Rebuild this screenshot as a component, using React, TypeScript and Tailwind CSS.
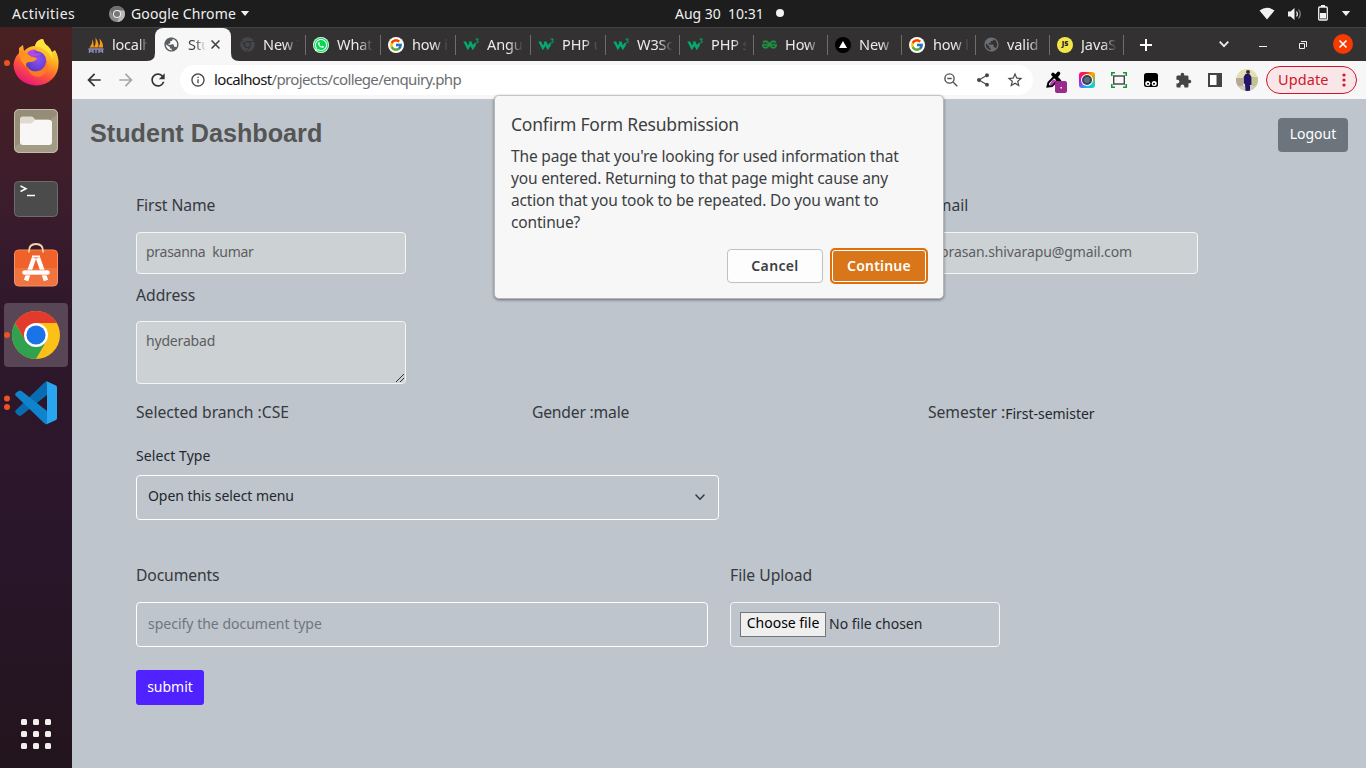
import type { ReactNode } from "react";
import {
  MdArrowBack,
  MdArrowForward,
  MdRefresh,
  MdInfoOutline,
  MdStarBorder,
  MdShare,
  MdExtension,
  MdPublic,
} from "react-icons/md";
import { FcGoogle } from "react-icons/fc";
import { FaWhatsapp, FaChrome } from "react-icons/fa";
import { SiGeeksforgeeks } from "react-icons/si";

/* ---------- tab icons ---------- */

function PmaIcon() {
  return (
    <svg viewBox="0 0 16 16" className="size-4">
      <path d="M1.500 10.500 Q4.500 7 4.800 2 L6 10.500Z M6 10.500 Q8.500 6 7.300 0.500 Q11 5 10.500 10.500Z M10.800 10.500 Q13 6 11.500 1.500 Q15.500 6 15 10.500Z" fill="#f59a1b" />
      <path d="M0.500 12h15M1.500 16V12M5 16v-4M8 16v-4M11 16v-4M14.500 16v-4M1.500 14h3M11 14h3" stroke="#8a8cb5" strokeWidth="1.400" fill="none" />
    </svg>
  );
}

function W3Icon() {
  return (
    <svg viewBox="0 0 16 16" className="size-4">
      <path d="M0.300 4.500H3.200L5 8.500L6.300 6L5.600 4.500H8.500L10 8.300L11.500 6H12.800V8.500L9.700 13.200L7.500 9L4.800 13.200Z" fill="#04aa6d" />
      <path d="M12.500 2h2.800l-1.400 1.600q1.700 0 1.500 1.400q-.6 1.400-2.700.6" stroke="#04aa6d" strokeWidth="1" fill="none" />
    </svg>
  );
}

function GoogleIcon() {
  return (
    <span className="flex size-4 items-center justify-center rounded-full bg-white">
      <FcGoogle className="size-[14px]" />
    </span>
  );
}

function WhatsIcon() {
  return (
    <span className="flex size-4 items-center justify-center rounded-full bg-[#06d755] text-white ring-1 ring-white/80 ring-inset">
      <FaWhatsapp className="size-[14px]" />
    </span>
  );
}

function TriangleIcon() {
  return (
    <svg viewBox="0 0 16 16" className="size-4">
      <circle cx="8" cy="8" r="8" fill="#000" />
      <path d="M8 4l4 7H4z" fill="#fff" />
    </svg>
  );
}

function JsIcon() {
  return (
    <span className="flex size-4 items-center justify-center rounded-full bg-[#f5e648] font-['Noto_Sans'] text-[7px] font-black text-[#222]">
      JS
    </span>
  );
}

type Tab = { icon: ReactNode; title: string; width: string };

const tabs: Tab[] = [
  { icon: <FaChrome className="size-[15px] text-[#45484b]" />, title: "New T", width: "w-[75px] pl-2" },
  { icon: <WhatsIcon />, title: "What", width: "w-[75px] pl-[7px]" },
  { icon: <GoogleIcon />, title: "how i", width: "w-[75px] pl-[7px]" },
  { icon: <W3Icon />, title: "Angu", width: "w-[75px] pl-[7px]" },
  { icon: <W3Icon />, title: "PHP u", width: "w-[75px] pl-[7px]" },
  { icon: <W3Icon />, title: "W3Sc", width: "w-[74px] pl-[7px]" },
  { icon: <W3Icon />, title: "PHP s", width: "w-[74px] pl-[7px]" },
  { icon: <SiGeeksforgeeks className="size-[15px] stroke-[#1e9442] stroke-1 text-[#1e9442]" />, title: "How", width: "w-[74px] pl-[7px]" },
  { icon: <TriangleIcon />, title: "New", width: "w-[74px] pl-[7px]" },
  { icon: <GoogleIcon />, title: "how l", width: "w-[74px] pl-[7px]" },
  { icon: <MdPublic className="size-[17px] shrink-0 text-[#6b6e73]" />, title: "valid", width: "w-[74px] pl-[7px]" },
  { icon: <JsIcon />, title: "JavaS", width: "w-[74px] pl-[7px]" },
];

function TabTitle({ children, dark }: { children: ReactNode; dark?: boolean }) {
  return (
    <span
      className={
        "ml-2 block overflow-hidden pb-[2px] text-[14.5px] leading-5 whitespace-pre " +
        (dark
          ? "w-[18px] text-[#3c4043] [mask-image:linear-gradient(to_right,black_40%,transparent)]"
          : "w-[36px] tracking-[-0.100px] text-[#ebebeb] [mask-image:linear-gradient(to_right,black_60%,transparent)]")
      }
    >
      {children}
    </span>
  );
}

/* ---------- desktop ---------- */

function TopBar() {
  return (
    <header className="flex h-[27px] shrink-0 items-center bg-[#1d1d1d] text-[14px] text-[#f0f0f0]">
      <span className="w-[97px] pl-3 text-[14px] tracking-[0.500px]">Activities</span>
      <svg viewBox="0 0 16 16" className="ml-3 size-4">
        <circle cx="8" cy="8" r="8" fill="#8a8a8a" />
        <path d="M8 4.200H15A8 8 0 0 1 8 16L11.300 10Z" fill="#b9b9b9" />
        <path d="M1 4A8 8 0 0 1 15 4.200H8L4.500 10Z" fill="#6f6f6f" />
        <circle cx="8" cy="8" r="4" fill="#eee" />
        <circle cx="8" cy="8" r="3" fill="#777" />
      </svg>
      <span className="ml-[6px] w-[105px] whitespace-nowrap tracking-[0.120px]">Google Chrome</span>
      <svg viewBox="0 0 10 6" className="ml-1 h-[5px] w-[10px]"><path d="M0 0h10L5 6z" fill="#f0f0f0" /></svg>
      <span className="ml-[425px] w-[53px] whitespace-nowrap">Aug 30</span>
      <span className="w-[35px]">10:31</span>
      <span className="-mt-px ml-[13px] size-2 rounded-full bg-[#f2f2f2]" />
      <svg viewBox="0 0 16 13" className="ml-auto h-[13px] w-4"><path d="M0.500 3.500Q8-2 15.500 3.500L8 12.500z" fill="#f2f2f2" /></svg>
      <svg viewBox="0 0 16 14" className="ml-3 h-[14px] w-4">
        <path d="M1 4.500h2.500L7.500 1v12L3.500 9.500H1z" fill="#f2f2f2" />
        <path d="M9.500 4.500q1.800 2.500 0 5" stroke="#f2f2f2" strokeWidth="1.200" fill="none" />
        <path d="M11.500 2.500q3.500 4.500 0 9" stroke="#8a8a8a" strokeWidth="1.200" fill="none" />
      </svg>
      <svg viewBox="0 0 10 16" className="-mt-px ml-[15px] h-4 w-[10px]">
        <path d="M3 0h4v2H3z" fill="#f2f2f2" />
        <rect x="0.700" y="2" width="8.600" height="13" rx="1" fill="none" stroke="#f2f2f2" strokeWidth="1.300" />
        <path d="M2 8h6v5.500H2z" fill="#f2f2f2" />
      </svg>
      <svg viewBox="0 0 10 6" className="mr-[15px] ml-[13px] h-[5px] w-[10px]"><path d="M0 0h10L5 6z" fill="#f0f0f0" /></svg>
    </header>
  );
}

function Dock() {
  return (
    <nav className="flex w-[72px] shrink-0 flex-col bg-[linear-gradient(to_bottom,#4a2122_0%,#3a1c2c_25%,#2e172b_40%,#2a162b_70%,#22141c_100%)] pt-[2px]">
      <svg viewBox="0 0 72 68" className="h-[68px] w-[72px]">
        <defs>
          <linearGradient id="ff" x1="0.800" y1="0" x2="0.300" y2="1">
            <stop offset="0" stopColor="#fff04a" />
            <stop offset="0.350" stopColor="#ffb31f" />
            <stop offset="0.650" stopColor="#ff5a35" />
            <stop offset="1" stopColor="#e6127d" />
          </linearGradient>
          <radialGradient id="ffc" cx="0.600" cy="0.400" r="0.650">
            <stop offset="0" stopColor="#8a52f5" />
            <stop offset="0.600" stopColor="#6f42d8" />
            <stop offset="1" stopColor="#4a3fa8" />
          </radialGradient>
        </defs>
        <circle cx="7" cy="34" r="3" fill="#e95420" />
        <path d="M19 19 L23 16 L24 22 Q29 17 35 17 Q36 11 43 10 Q44 15 48 17 Q51 20 52 23 L55 21 Q59 28 58.500 35 A22.500 21 0 0 1 13.500 36 Q14 29 19 24Z" fill="url(#ff)" />
        <path d="M35 17 Q36 11 43 10 Q45 16 48 18 Q53 23 53 32 Q50 20 35 17Z" fill="#ffe43a" />
        <circle cx="36" cy="32.500" r="10.500" fill="url(#ffc)" />
        <path d="M19 24 Q23 25 27 24 Q30 28 37 29 Q36 33 30 33 Q25 33 26 38 Q20 32 19 24Z" fill="#ff9420" />
        <path d="M26 36 Q30 44 38 42 Q46 40 46 31 Q50 42 42 47 Q31 51 26 36Z" fill="#ff7a28" />
        <path d="M27 24 Q31 19 37 21 Q34 23 34 24 Q39 24 42 25 Q37 28 32 28Z" fill="#b04ae0" />
      </svg>
      <svg viewBox="0 0 72 68" className="h-[68px] w-[72px]">
        <rect x="14" y="12" width="44" height="44" rx="5" fill="#a29b86" />
        <path d="M19 12.500H53Q57.500 12.500 57.500 17L14.500 50V17Q14.500 12.500 19 12.500Z" fill="#958d78" />
        <rect x="14.500" y="12.500" width="43" height="43" rx="5" fill="none" stroke="#c2bca9" />
        <path d="M20 22q0-2.500 2.500-2.500h9q2 0 3.500 3h14v8H20z" fill="#dedace" />
        <path d="M20 26.500h11l4-3.500h14.500q2.500 0 2.500 2.500V45q0 3-3 3H23q-3 0-3-3z" fill="#f8f7f5" />
      </svg>
      <svg viewBox="0 0 72 68" className="h-[68px] w-[72px]">
        <rect x="14.500" y="16.500" width="43" height="35" rx="4" fill="#4b4b4b" stroke="#6c6c6c" />
        <path d="M20.500 21l5.500 2.700l-5.500 2.800" stroke="#fff" strokeWidth="1.500" fill="none" />
        <path d="M27 30.500h8" stroke="#fff" strokeWidth="1.500" />
      </svg>
      <svg viewBox="0 0 72 68" className="h-[68px] w-[72px]">
        <rect x="14.500" y="17" width="43" height="36" rx="4" fill="#f0743f" stroke="#f59067" />
        <path d="M15 35V21q0-3.500 3.500-3.500h35q3.500 0 3.500 3.500V35z" fill="#f0622a" />
        <path d="M29 19.500V18q0-7 7-7t7 7v1.500" stroke="#f7d7a6" strokeWidth="1.800" fill="none" />
        <path d="M26 47.500L34 25M46 47.500L38 25" stroke="#fff" strokeWidth="4.500" />
        <path d="M32 23.500h8" stroke="#fff" strokeWidth="2" />
        <rect x="22" y="37" width="28" height="5" rx="2.500" fill="#fff" stroke="#f0743f" strokeWidth="0.600" />
      </svg>
      <svg viewBox="0 0 72 68" className="h-[68px] w-[72px]">
        <rect x="4" y="2" width="64" height="64" rx="4" fill="#584555" />
        <circle cx="7" cy="34" r="3" fill="#e95420" />
        <circle cx="36" cy="34" r="24" fill="#fbc116" />
        <path d="M15.200 22A24 24 0 0 0 36 58L46.400 40L36 34L25.600 40Z" fill="#30a24f" />
        <path d="M15.200 22A24 24 0 0 1 56.800 22H36L25.600 40Z" fill="#e23b2e" />
        <circle cx="36" cy="34" r="12" fill="#fff" />
        <circle cx="36" cy="34" r="9.600" fill="#1a73e8" />
      </svg>
      <svg viewBox="0 0 72 68" className="h-[68px] w-[72px]">
        <circle cx="7" cy="29.500" r="3" fill="#e95420" />
        <circle cx="7" cy="38" r="3" fill="#e95420" />
        <path d="M15.500 41.500Q14.500 43 16 44.200L18.500 46.500Q20 47.500 21.500 46.300L47 26V13Q45.500 12.500 44 14Z" fill="#0a6cb0" />
        <path d="M15.500 26.500Q14.500 25 16 23.800L18.500 22Q20 21 21.500 22L47 42V55Q45.500 55.500 44 54Z" fill="#0f84cc" />
        <path d="M46 12L56 16.500Q57 17 57 18.500V49Q57 50.500 56 51L46 55.500Q47 54 47 52V15.500Q47 13.500 46 12Z" fill="#28a7f0" />
      </svg>
      <div className="mx-auto mt-auto mb-[19px] grid grid-cols-3 gap-[6px]">
        {Array.from({ length: 9 }, (_, i) => (
          <span key={i} className="size-[6px] rounded-[1.500px] bg-[#f2f0ee]" />
        ))}
      </div>
    </nav>
  );
}

/* ---------- browser chrome ---------- */

function TabStrip() {
  return (
    <div className="flex h-[34px] shrink-0 items-center border-t border-[#454243] bg-[#333132]">
      <div className="flex w-[83px] items-center pl-4">
        <PmaIcon />
        <span className="ml-2 block w-[36px] overflow-hidden pb-[2px] text-[14.5px] leading-5 tracking-[-0.200px] whitespace-pre text-[#ebebeb] [mask-image:linear-gradient(to_right,black_75%,transparent)]">
          localh
        </span>
      </div>
      <div className="relative flex h-full w-[76px] items-center rounded-t-lg bg-[#f7f7f7] pl-2">
        <svg viewBox="0 0 8 8" className="absolute bottom-0 -left-2 size-2"><path d="M8 0v8H0Q8 8 8 0z" fill="#f7f7f7" /></svg>
        <svg viewBox="0 0 8 8" className="absolute -right-2 bottom-0 size-2"><path d="M0 0v8H8Q0 8 0 0z" fill="#f7f7f7" /></svg>
        <MdPublic className="size-[17px] -rotate-12 text-[#5a5e63]" />
        <TabTitle dark>Stu</TabTitle>
        <svg viewBox="0 0 8 8" className="ml-[5px] size-[9px]"><path d="M.5.5l7 7M7.500.5l-7 7" stroke="#3c4043" strokeWidth="1.400" /></svg>
      </div>
      {tabs.map((t, i) => (
        <div key={i} className={"flex h-5 items-center border-r border-[#6f6d6e] " + t.width}>
          <span className="flex w-4 shrink-0 items-center justify-center">{t.icon}</span>
          <TabTitle>{t.title}</TabTitle>
        </div>
      ))}
      <svg viewBox="0 0 12 12" className="ml-4 size-3"><path d="M6 0v12M0 6h12" stroke="#fff" strokeWidth="2" /></svg>
      <svg viewBox="0 0 10 7" className="ml-[67px] h-[7px] w-[10px]"><path d="M.7.7L5 5.200L9.300.7" stroke="#eee" strokeWidth="1.800" fill="none" /></svg>
      <span className="mt-[4px] ml-[30px] h-px w-2 bg-[#eee]" />
      <svg viewBox="0 0 8 8" className="ml-8 size-2"><path d="M.5 2.500h5v5h-5zM2 .5h5.500V6" stroke="#eee" strokeWidth="1" fill="none" /></svg>
      <svg viewBox="0 0 20 20" className="-mt-px ml-[26px] size-5">
        <circle cx="10" cy="10" r="10" fill="#f53b00" />
        <path d="M6.500 6.500l7 7M13.500 6.500l-7 7" stroke="#fff" strokeWidth="1.600" />
      </svg>
    </div>
  );
}

function Slot({ children }: { children: ReactNode }) {
  return <span className="flex w-8 shrink-0 items-center justify-center">{children}</span>;
}

function Toolbar() {
  return (
    <div className="flex h-[38px] shrink-0 items-center bg-[#f7f7f7] pl-[6px] text-[#46494c]">
      <Slot><MdArrowBack className="size-5 text-[#333]" /></Slot>
      <Slot><MdArrowForward className="size-5 text-[#a6a6a6]" /></Slot>
      <Slot><MdRefresh className="size-5 text-[#333]" /></Slot>
      <div className="ml-[6px] flex h-[30px] w-[853px] shrink-0 items-center rounded-full bg-white pl-[10px]">
        <MdInfoOutline className="size-4" />
        <span className="ml-2 pb-[2px] text-[15px] tracking-[-0.650px] whitespace-nowrap text-[#6b6e72]">
          <span className="text-[#161616]">localhost</span>/projects/college/enquiry.php
        </span>
        <span className="ml-auto flex pr-[2px]">
          <Slot>
            <svg viewBox="0 0 14 14" className="size-[14px]" fill="none" stroke="#505356" strokeWidth="1.400">
              <circle cx="5.500" cy="5.500" r="4.600" />
              <path d="M3.300 5.500h4.400M9 9l4.300 4.300" />
            </svg>
          </Slot>
          <Slot><MdShare className="size-4" /></Slot>
          <Slot><MdStarBorder className="size-[18px]" /></Slot>
        </span>
      </div>
      <span className="w-[6px]" />
      <Slot>
        <svg viewBox="0 0 24 24" className="size-6 translate-x-[2px] translate-y-[2px]">
          <path d="M2.500 16.500l1-4L9.500 6.500l3.500 3.500L7 16z" fill="#fff" stroke="#000" strokeWidth="2" />
          <path d="M4.500 14.500l3.500-5l3 1L6.500 15.500z" fill="#c930c9" />
          <path d="M8 4.500L14.500 11M11 6.500L13.500 3.500" stroke="#000" strokeWidth="3.600" strokeLinecap="round" />
          <rect x="10" y="11" width="12" height="12" rx="2" fill="#9a2a8b" />
          <rect x="15.500" y="17" width="1.500" height="1.500" fill="#fff" />
        </svg>
      </Slot>
      <Slot>
        <span className="flex size-4 items-center justify-center rounded-[3px] bg-[conic-gradient(from_45deg,#f5a000,#10d0d8_25%,#20b0f0_40%,#b020e8_60%,#ff1070_75%,#ff2020_85%,#f5c000)]">
          <span className="flex size-3 items-center justify-center rounded-full bg-white">
            <span className="size-[10px] rounded-full border-2 border-[#3b4450] bg-[#527080]" />
          </span>
        </span>
      </Slot>
      <Slot>
        <svg viewBox="0 0 16 16" className="size-4">
          <path d="M.8 4V.8H4M12 .8h3.200V4M15.200 12v3.200H12M4 15.200H.8V12" stroke="#159a30" strokeWidth="1.600" fill="none" />
          <rect x="2.700" y="4" width="10.600" height="8" fill="none" stroke="#444" strokeWidth="1.400" />
        </svg>
      </Slot>
      <Slot>
        <svg viewBox="0 0 14 14" className="size-[14px]">
          <rect width="14" height="14" rx="2.500" fill="#000" />
          <circle cx="3.800" cy="10.500" r="2.500" fill="#fff" /><circle cx="10.200" cy="10.500" r="2.500" fill="#fff" />
          <circle cx="4" cy="10.800" r="1" fill="#000" /><circle cx="10" cy="10.800" r="1" fill="#000" />
        </svg>
      </Slot>
      <Slot><MdExtension className="size-[17px] text-[#444]" /></Slot>
      <Slot>
        <svg viewBox="0 0 14 14" className="size-[14px]"><path d="M1 1h12v12H1z" fill="#fff" stroke="#444" strokeWidth="2" /><path d="M8.500 1H13v12H8.500z" fill="#444" /></svg>
      </Slot>
      <Slot>
        <svg viewBox="0 0 22 22" className="size-[22px]">
          <clipPath id="av"><circle cx="11" cy="11" r="11" /></clipPath>
          <g clipPath="url(#av)">
            <path d="M0 0h22v22H0z" fill="#e3dfb4" />
            <path d="M0 9h7v8H0z" fill="#b9a795" />
            <path d="M16 8h6v9h-6z" fill="#c3c293" />
            <path d="M0 17h22v5H0z" fill="#cfcac0" />
            <path d="M9.500 5h4l2 3v8l-1.500 0V22H9.500L9 15l-1.300-.5V8z" fill="#241469" />
            <circle cx="12" cy="3" r="2" fill="#3c2a35" />
          </g>
        </svg>
      </Slot>
      <div className="ml-[3px] flex h-7 w-[91px] items-center rounded-full border border-[#d31526] bg-[#f8e6e8] pl-[11px] text-[14.5px] tracking-[0.100px] text-[#d31526]">
        <span className="w-[50px] pb-px">Update</span>
        <svg viewBox="0 0 4 14" className="ml-[14px] h-[14px] w-1"><circle cx="2" cy="2" r="1.600" fill="#d31526" /><circle cx="2" cy="7" r="1.600" fill="#d31526" /><circle cx="2" cy="12" r="1.600" fill="#d31526" /></svg>
      </div>
    </div>
  );
}

/* ---------- page ---------- */

function Label({ children, className = "" }: { children: ReactNode; className?: string }) {
  return <div className={"h-[22px] text-[15.7px] leading-[22px] whitespace-nowrap text-[#36393d] " + className}>{children}</div>;
}

function ReadOnly({ children, className = "" }: { children: ReactNode; className?: string }) {
  return (
    <div className={"w-[270px] rounded-[4px] border border-[#f4f5f6] bg-[#ccd1d4] pl-[9px] text-[14px] whitespace-pre text-[#5c5e60] " + className}>
      {children}
    </div>
  );
}

function Page() {
  return (
    <main className="relative min-h-0 flex-1 bg-[#bec5cd] pt-[19px] text-[14px] text-[#24282c]">
      <div className="flex h-[34px] items-center justify-between pr-[18px] pl-[18px]">
        <h1 className="-mt-[3px] font-['Liberation_Sans'] text-[25.2px] font-bold text-[#555]">Student Dashboard</h1>
        <button className="h-[34px] w-[70px] rounded-[4px] bg-[#6c757d] pb-[3px] text-[14px] text-white">Logout</button>
      </div>

      <form className="px-16 pt-[42px]">
        <div className="flex">
          <div className="w-[792px]">
            <Label className="tracking-[-0.080px]">First Name</Label>
            <ReadOnly className="mt-4 h-[42px] leading-[37px] tracking-[-0.280px]">{"prasanna  kumar"}</ReadOnly>
          </div>
          <div>
            <Label>Email</Label>
            <ReadOnly className="mt-4 h-[42px] leading-[37px] tracking-[-0.110px]">
              <span className="pl-[2px]">prasan.shivarapu@gmail.com</span>
            </ReadOnly>
          </div>
        </div>
        <Label className="mt-[10px]">Address</Label>
        <div className="relative mt-[15px] w-[270px]">
          <ReadOnly className="h-[63px] pt-2 leading-[22px] tracking-[-0.180px]">hyderabad</ReadOnly>
          <svg viewBox="0 0 8 8" className="absolute right-[2px] bottom-[2px] size-2"><path d="M0 8L8 0M4 8L8 4" stroke="#333" strokeWidth="1" /></svg>
        </div>

        <div className="mt-[17px] flex">
          <Label className="w-[396px] tracking-[-0.010px]">Selected branch :CSE</Label>
          <Label className="w-[396px] tracking-[-0.200px]">Gender :male</Label>
          <Label className="tracking-[-0.060px]">
            Semester :<span className="relative top-px text-[14px] tracking-[-0.020px] text-[#24282c]">First-semister</span>
          </Label>
        </div>

        <div className="mt-[22px] h-[21px] leading-[21px] tracking-[0.080px]">Select Type</div>
        <div className="mt-[9px] flex h-[45px] w-[583px] items-center justify-between rounded-[4px] border border-white pr-[13px] pb-[3px] pl-[11px] tracking-[-0.060px]">
          <span className="pb-px">Open this select menu</span>
          <svg viewBox="0 0 10 7" className="mt-[3px] h-[7px] w-[10px]"><path d="M1 1L5 5.300L9 1" stroke="#343a40" strokeWidth="1.500" fill="none" strokeLinecap="round" strokeLinejoin="round" /></svg>
        </div>

        <div className="mt-[44px] flex gap-[22px]">
          <div className="w-[572px]">
            <Label className="tracking-[-0.120px]">Documents</Label>
            <div className="mt-4 flex h-[45px] items-center rounded-[4px] border border-white pb-[2px] pl-[11px] text-[#6f767d]">
              specify the document type
            </div>
          </div>
          <div className="w-[270px]">
            <Label>File Upload</Label>
            <div className="mt-4 flex h-[45px] items-center rounded-[4px] border border-[#f4f5f6] pl-[9px]">
              <span className="flex h-[25px] w-[86px] items-center justify-center border border-[#767676] bg-[#efefef] pb-[4px] text-black">Choose file</span>
              <span className="ml-[3px] pb-[2px]">No file chosen</span>
            </div>
          </div>
        </div>
        <button type="button" className="mt-[23px] h-[35px] w-[68px] rounded-[3px] bg-[#4f22ff] pb-[2px] text-[14px] text-white">submit</button>
      </form>

      <div
        role="dialog"
        className="absolute -top-[4px] left-[422px] h-[204px] w-[450px] rounded-[5px] border border-[#b4b7bb] border-t-[#c4c4c4] bg-[#f7f7f7] px-4 text-[#3c3f42] shadow-[0_1px_3px_rgba(0,0,0,0.45)]"
      >
        <h2 className="mt-[17px] h-[23px] text-[17.500px] leading-[23px] tracking-[-0.210px]">Confirm Form Resubmission</h2>
        <p className="mt-[9px] w-[416px] text-[15.500px] leading-[22px] tracking-[-0.160px] whitespace-pre-line">
          {"The page that you're looking for used information that\nyou entered. Returning to that page might cause any\naction that you took to be repeated. Do you want to\ncontinue?"}
        </p>
        <div className="mt-[15px] -mr-px flex items-center justify-end gap-[7px] text-[14px] font-semibold">
          <button className="h-[34px] w-[96px] rounded-[4px] border border-[#c0c0c0] bg-[#fdfdfd] pb-px tracking-[0.350px]">Cancel</button>
          <button className="h-9 w-[98px] rounded-[5px] border-2 border-[#dd6f0e] bg-[#d97619] pb-px text-white tracking-[0.200px] shadow-[inset_0_0_0_1px_#fff]">Continue</button>
        </div>
      </div>
    </main>
  );
}

export default function App() {
  return (
    <div className="flex h-[768px] w-[1366px] flex-col overflow-hidden font-['Noto_Sans',sans-serif]">
      <TopBar />
      <div className="flex min-h-0 flex-1">
        <Dock />
        <div className="flex min-w-0 flex-1 flex-col">
          <TabStrip />
          <Toolbar />
          <Page />
        </div>
      </div>
    </div>
  );
}
